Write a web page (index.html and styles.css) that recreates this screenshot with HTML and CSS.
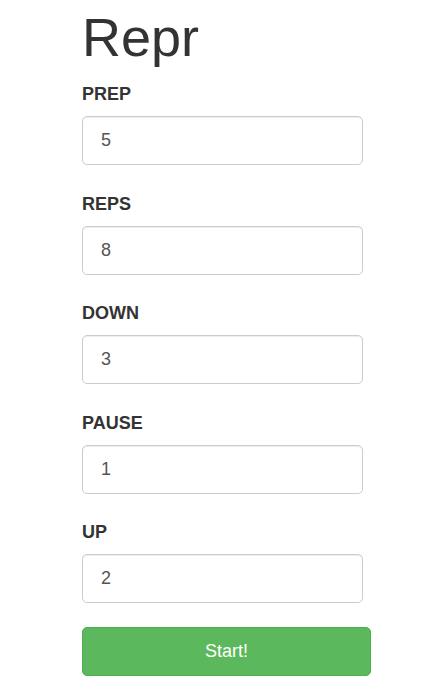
FILE: index.html
```html
<!DOCTYPE html>
<html>
<head>
<meta charset="utf-8">
<link rel="stylesheet" href="styles.css">
</head>
<body>
<div class="container">
  <h1 class="title">Repr</h1>
  <form class="form">
    <div class="group">
      <label class="label">PREP</label>
      <input class="input" type="text" value="5">
    </div>
    <div class="group">
      <label class="label">REPS</label>
      <input class="input" type="text" value="8">
    </div>
    <div class="group">
      <label class="label">DOWN</label>
      <input class="input" type="text" value="3">
    </div>
    <div class="group">
      <label class="label">PAUSE</label>
      <input class="input" type="text" value="1">
    </div>
    <div class="group">
      <label class="label">UP</label>
      <input class="input" type="text" value="2">
    </div>
    <button class="btn" type="button">Start!</button>
  </form>
</div>
</body>
</html>
```

FILE: styles.css
```css
html, body {
  margin: 0;
  padding: 0;
  background: #ffffff;
}
body {
  font-family: "Liberation Sans", Arial, sans-serif;
  color: #333333;
}
.container {
  padding: 7px 0 0 82px;
}
.title {
  margin: 0;
  font-size: 54px;
  font-weight: 500;
  line-height: 60px;
  color: #333333;
}
.form {
  display: flex;
  flex-direction: column;
  margin-top: 17px;
}
.group {
  display: flex;
  flex-direction: column;
  margin-bottom: 28.5px;
}
.label {
  display: block;
  font-size: 18px;
  font-weight: bold;
  line-height: 20px;
  margin-bottom: 12px;
  color: #333333;
}
.input {
  box-sizing: border-box;
  width: 281px;
  height: 49px;
  padding: 0 18px;
  border: 1px solid #cccccc;
  border-radius: 5px;
  font-family: "Liberation Sans", Arial, sans-serif;
  font-size: 18px;
  color: #555555;
  background: #ffffff;
  box-shadow: inset 0 1px 1px rgba(0,0,0,0.075);
  outline: none;
}
.btn {
  box-sizing: border-box;
  width: 289px;
  height: 49px;
  margin-top: -4.5px;
  border: 1px solid #4cae4c;
  border-radius: 5px;
  background: #5cb85c;
  color: #ffffff;
  font-family: "Liberation Sans", Arial, sans-serif;
  font-size: 18px;
  cursor: pointer;
}
```
